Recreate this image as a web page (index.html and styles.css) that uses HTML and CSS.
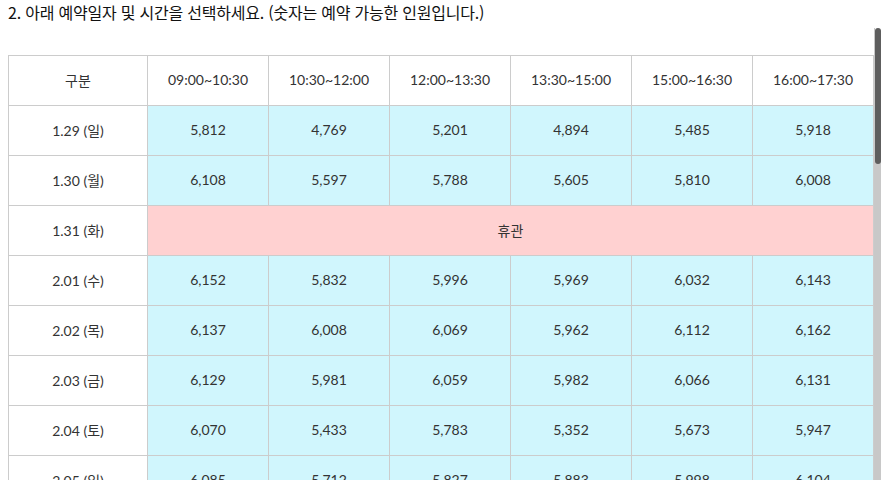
FILE: index.html
```html
<!DOCTYPE html>
<html lang="ko">
<head>
<meta charset="utf-8">
<link rel="stylesheet" href="styles.css">
</head>
<body>
<h2 class="title">2. 아래 예약일자 및 시간을 선택하세요. (숫자는 예약 가능한 인원입니다.)</h2>
<div class="frame">
<div class="scroller">
<table class="res">
<thead>
<tr><th class="c0">구분</th><th>09:00~10:30</th><th>10:30~12:00</th><th>12:00~13:30</th><th>13:30~15:00</th><th>15:00~16:30</th><th>16:00~17:30</th></tr>
</thead>
<tbody>
<tr><th>1.29 (일)</th><td>5,812</td><td>4,769</td><td>5,201</td><td>4,894</td><td>5,485</td><td>5,918</td></tr>
<tr><th>1.30 (월)</th><td>6,108</td><td>5,597</td><td>5,788</td><td>5,605</td><td>5,810</td><td>6,008</td></tr>
<tr><th>1.31 (화)</th><td class="closed" colspan="6">휴관</td></tr>
<tr><th>2.01 (수)</th><td>6,152</td><td>5,832</td><td>5,996</td><td>5,969</td><td>6,032</td><td>6,143</td></tr>
<tr><th>2.02 (목)</th><td>6,137</td><td>6,008</td><td>6,069</td><td>5,962</td><td>6,112</td><td>6,162</td></tr>
<tr><th>2.03 (금)</th><td>6,129</td><td>5,981</td><td>6,059</td><td>5,982</td><td>6,066</td><td>6,131</td></tr>
<tr><th>2.04 (토)</th><td>6,070</td><td>5,433</td><td>5,783</td><td>5,352</td><td>5,673</td><td>5,947</td></tr>
<tr><th>2.05 (일)</th><td>6,085</td><td>5,712</td><td>5,827</td><td>5,883</td><td>5,998</td><td>6,104</td></tr>
<tr><th>2.06 (월)</th><td>6,140</td><td>5,921</td><td>6,012</td><td>5,954</td><td>6,087</td><td>6,150</td></tr>
<tr><th>2.07 (화)</th><td class="closed" colspan="6">휴관</td></tr>
<tr><th>2.08 (수)</th><td>6,160</td><td>6,021</td><td>6,088</td><td>6,034</td><td>6,110</td><td>6,170</td></tr>
<tr><th>2.09 (목)</th><td>6,171</td><td>6,045</td><td>6,093</td><td>6,052</td><td>6,121</td><td>6,176</td></tr>
<tr><th>2.10 (금)</th><td>6,158</td><td>6,010</td><td>6,072</td><td>6,020</td><td>6,098</td><td>6,163</td></tr>
<tr><th>2.11 (토)</th><td>6,092</td><td>5,611</td><td>5,842</td><td>5,598</td><td>5,781</td><td>5,990</td></tr>
<tr><th>2.12 (일)</th><td>6,101</td><td>5,745</td><td>5,866</td><td>5,902</td><td>6,011</td><td>6,117</td></tr>
<tr><th>2.13 (월)</th><td>6,155</td><td>5,960</td><td>6,031</td><td>5,987</td><td>6,095</td><td>6,158</td></tr>
<tr><th>2.14 (화)</th><td class="closed" colspan="6">휴관</td></tr>
<tr><th>2.15 (수)</th><td>6,172</td><td>6,050</td><td>6,101</td><td>6,066</td><td>6,128</td><td>6,180</td></tr>
<tr><th>2.16 (목)</th><td>6,178</td><td>6,068</td><td>6,115</td><td>6,077</td><td>6,134</td><td>6,185</td></tr>
<tr><th>2.17 (금)</th><td>6,166</td><td>6,039</td><td>6,090</td><td>6,048</td><td>6,117</td><td>6,172</td></tr>
<tr><th>2.18 (토)</th><td>6,103</td><td>5,687</td><td>5,880</td><td>5,651</td><td>5,822</td><td>6,014</td></tr>
<tr><th>2.19 (일)</th><td>6,119</td><td>5,790</td><td>5,901</td><td>5,933</td><td>6,040</td><td>6,128</td></tr>
<tr><th>2.20 (월)</th><td>6,163</td><td>5,988</td><td>6,049</td><td>6,004</td><td>6,106</td><td>6,166</td></tr>
<tr><th>2.21 (화)</th><td class="closed" colspan="6">휴관</td></tr>
<tr><th>2.22 (수)</th><td>6,181</td><td>6,072</td><td>6,120</td><td>6,085</td><td>6,140</td><td>6,188</td></tr>
<tr><th>2.23 (목)</th><td>6,184</td><td>6,080</td><td>6,126</td><td>6,091</td><td>6,145</td><td>6,190</td></tr>
<tr><th>2.24 (금)</th><td>6,176</td><td>6,061</td><td>6,108</td><td>6,070</td><td>6,131</td><td>6,182</td></tr>
<tr><th>2.25 (토)</th><td>6,114</td><td>5,720</td><td>5,903</td><td>5,689</td><td>5,850</td><td>6,031</td></tr>
</tbody>
</table>
</div>
<div class="sbar"><div class="thumb"></div></div>
</div>
</body>
</html>
```

FILE: styles.css
```css
html, body {
  margin: 0;
  padding: 0;
  background: #fff;
}

body {
  font-family: Lato, "Noto Sans CJK KR", sans-serif;
  color: #333;
}

.title {
  margin: 0 0 4px 8px;
  font-family: "Noto Sans CJK KR", sans-serif;
  font-size: 16px;
  font-weight: 400;
  line-height: 24px;
  letter-spacing: -0.22px;
  color: #111;
}

.frame {
  position: relative;
  margin-left: 8px;
  width: 873px;
  height: 452px;
}

.scroller {
  width: 866px;
  height: 452px;
  overflow: hidden;
}

.sbar {
  position: absolute;
  top: 0;
  right: 0;
  width: 7px;
  height: 452px;
  background: #c8c8c8;
}

.sbar .thumb {
  width: 6px;
  height: 136px;
  margin-left: 1px;
  background: #5e5e5e;
  border-radius: 3px;
  box-shadow: 0 -3px 0 #fff;
}

.res {
  margin-top: 27px;
  width: 866px;
  border-collapse: collapse;
  table-layout: fixed;
  font-size: 14px;
}

.res th,
.res td {
  border: 1px solid #ccc;
  height: 47px;
  padding: 0 0 2px;
  text-align: center;
  vertical-align: middle;
  font-weight: 400;
  color: #333;
}

.res .c0 {
  width: 138px;
}

.res td {
  background: #d0f6fd;
}

.res td.closed {
  background: #ffd1d1;
}
```
